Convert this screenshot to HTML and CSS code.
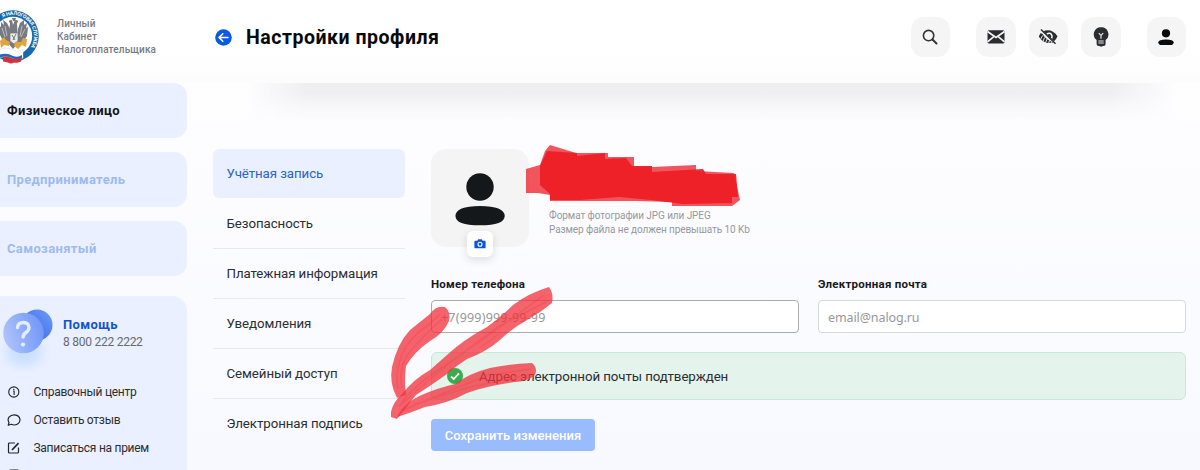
FILE: index.html
```html
<!DOCTYPE html>
<html lang="ru">

<head>
  <meta charset="UTF-8">
  <title>Настройки профиля</title>
  <link rel="stylesheet" href="styles.css">
</head>

<body>
  <header class="header">
    <div class="brand">
      <svg class="brand-logo" viewBox="0 0 39 56" width="39" height="56">
        <defs>
          <path id="ring" d="M2.800 8.500A21.1 21.1 0 0 1 30.1 39.200" />
        </defs>
        <circle cx="13" cy="27" r="25.8" fill="#1769aa" />
        <circle cx="13" cy="27" r="19.2" fill="#fff" />
        <text class="ring-text"><textPath href="#ring" textLength="55">Я НАЛОГОВАЯ СЛУЖБА</textPath></text>
        <g fill="#777a80">
          <path d="M10 20L7 14L3 11L4 16L1 13L1 18L-2 16L0 26L3 32L9 34ZM18 20L20 14L24 11L24 16L27 14L26 19L28 18L27 27L23 33L17 34Z" />
          <path d="M10 14q-3-3 2-3l1 5 2-5q5 0 2 3l1 20-5 6-5-6Z" />
          <path d="M12 9h4l-1 3h-2z" />
        </g>
        <path d="M5 17l2 10M2 19l3 9M22 17l-2 10M25 20l-4 8" stroke="#c9cbd0" stroke-width=".8" />
        <path d="M10 24h8v8l-4 3-4-3z" fill="#ececec" stroke="#777" stroke-width=".7" />
        <path d="M12 26l3 5M16 25l-3 6" stroke="#777" />
        <path d="M0 32l4-4 2 3 4 2-1 4-5-1-3 3zM27 30l-4-1-2 4-6 0-1 4 4 3 4-4 4 2z" fill="#e0a53f" />
        <path d="M-1 41q7-4 14 0q6 3 10-1v9q-6 4-11 0q-7-3-13 0z" fill="#fff" stroke="#ccd2da" stroke-width=".5" />
        <path d="M-1 46q7-3 14 1q5 2 9-1v3q-5 3-10 0q-6-3-13 0z" fill="#2768ae" />
        <path d="M3 48q5-1 9 1.500q5 2 10-1l-1 4q-4 2-7 1q-3 2-6 0l-5-1z" fill="#d5303c" />
      </svg>
      <div class="brand-name">Личный<br>Кабинет<br>Налогоплательщика</div>
    </div>

    <div class="page-title">
      <svg class="back" viewBox="0 0 17 17" width="17" height="17">
        <circle cx="8.5" cy="8.5" r="8.3" fill="#0b59e5" />
        <path d="M13 8.5H4M7.800 4.700l-3.800 3.800 3.800 3.800" fill="none" stroke="#fff" stroke-width="1.5" stroke-linecap="round" stroke-linejoin="round" />
      </svg>
      <h1>Настройки профиля</h1>
    </div>

    <div class="tools">
      <button class="tool tool-search">
        <svg viewBox="0 0 20 20" width="20" height="20" fill="none" stroke="#333538" stroke-width="1.6">
          <circle cx="8.600" cy="8.600" r="5.2" />
          <path d="M12.500 12.500l4 4" stroke-width="2" stroke-linecap="round" />
        </svg>
      </button>
      <button class="tool">
        <svg viewBox="0 0 20 20" width="20" height="20">
          <rect x="1.500" y="3.200" width="17" height="13.200" rx="1.5" fill="#2b2d30" />
          <path d="M1.500 4.500l8.500 6 8.500-6M1.500 14.800l6-5M18.500 14.800l-6-5" fill="none" stroke="#f5f5f5" stroke-width="1.700" />
        </svg>
      </button>
      <button class="tool">
        <svg viewBox="0 0 20 20" width="20" height="20">
          <path d="M4.500 4.700Q13 .3 19.500 9.200Q18.500 12 16 14.200Z" fill="#2b2d30" />
          <path d="M8.800 7q3.500-2 5 1.300q.5 1.500-.2 3" fill="none" stroke="#f5f5f5" stroke-width="1.600" />
          <path d="M2.800 6Q1.500 7.500.8 9.500Q5.500 18 15.500 15.500Q8 13 4.500 7z" fill="#2b2d30" />
          <path d="M2.500 12.500l2-4M5 14.500l1.500-4M7.500 16l1.500-4M10.500 16.500l1-3M13 16.500l.5-2" stroke="#f5f5f5" stroke-width=".9" />
          <path d="M4 4l14 13.500" stroke="#f5f5f5" stroke-width="1.200" />
          <path d="M3 2.500l14.500 14.200" stroke="#2b2d30" stroke-width="1.5" />
        </svg>
      </button>
      <button class="tool">
        <svg viewBox="0 0 20 20" width="20" height="20">
          <path d="M10 .3a7 7 0 0 0-4.4 12.600V17q0 2 2 2h.9q1.7 1.4 3.3 0h.8q2 0 2-2v-4.100A7 7 0 0 0 10 .3z" fill="#2b2d30" />
          <path d="M7.8 6.2l2.2 2.2 2.2-2.2M10 8.4v3.400" fill="none" stroke="#e6e6e8" stroke-width="1.2" />
          <path d="M7.400 14h5.300M7.400 16h5.300" stroke="#a9a9ac" stroke-width="1.300" />
        </svg>
      </button>
      <button class="tool tool-user">
        <svg viewBox="0 0 20 20" width="20" height="20" fill="#090a0c">
          <circle cx="10" cy="6.3" r="4.1" />
          <path d="M2.4 15.2Q2.6 12.5 10 12.5T17.6 15.2Q17.6 18 14.5 18h-9Q2.4 18 2.4 15.2z" />
        </svg>
      </button>
    </div>
  </header>

  <div class="layout">
    <aside class="sidebar">
      <a class="role role-active">Физическое лицо</a>
      <a class="role">Предприниматель</a>
      <a class="role">Самозанятый</a>

      <div class="help">
        <div class="help-top">
          <svg class="help-icon" viewBox="0 0 60 68" width="60" height="68">
            <defs>
              <linearGradient id="ball" x1="1" y1="0" x2="0" y2="1">
                <stop offset="0" stop-color="#6f9bf8" />
                <stop offset="1" stop-color="#2f62e8" />
              </linearGradient>
              <linearGradient id="glass" x1="0" y1=".6" x2="1" y2=".3">
                <stop offset="0" stop-color="#b0c4f8" />
                <stop offset=".6" stop-color="#87a8fa" />
                <stop offset="1" stop-color="#7096f6" />
              </linearGradient>
              <filter id="soft" x="-50%" y="-50%" width="200%" height="200%">
                <feGaussianBlur stdDeviation="6" />
              </filter>
            </defs>
            <ellipse cx="24" cy="47" rx="18" ry="14" fill="#c9deff" filter="url(#soft)" />
            <circle cx="37" cy="20" r="15.5" fill="url(#ball)" />
            <circle cx="23.5" cy="28" r="20.3" fill="url(#glass)" />
            <path d="M17.5 22.5q.3-5 5.7-5t5.8 5q0 3-3 5t-2.8 4.5" fill="none" stroke="#e4edff" stroke-width="3.4" stroke-linecap="round" />
            <circle cx="23" cy="39.5" r="2.1" fill="#e4edff" />
          </svg>
          <div>
            <div class="help-title">Помощь</div>
            <div class="help-phone">8 800 222 2222</div>
          </div>
        </div>
        <ul class="help-links">
          <li>
            <svg viewBox="0 0 14 14" width="14" height="14" fill="none" stroke="#222429" stroke-width="1.1">
              <circle cx="6.800" cy="7" r="5.1" />
              <path d="M6.100 6h1v4M6.800 3.7v1.2" />
            </svg>
            <span>Справочный центр</span>
          </li>
          <li>
            <svg viewBox="0 0 14 14" width="14" height="14" fill="none" stroke="#222429" stroke-width="1.2">
              <path d="M1.2 12.3l.8-2.8Q.2 6.8 2 4.2 4 1.7 7.4 1.8q5.3.4 5.6 5Q12.700 11.600 7.400 12q-1.700 0-3.100-.7z" stroke-linejoin="round" />
            </svg>
            <span>Оставить отзыв</span>
          </li>
          <li>
            <svg viewBox="0 0 14 14" width="14" height="14" fill="none" stroke="#222429" stroke-width="1.2">
              <path d="M8 2H2.500Q1.500 2 1.500 3v8q0 1 1 1h8q1 0 1-1V6.500" />
              <path d="M5 9l6.500-6.800" stroke-width="1.700" />
            </svg>
            <span>Записаться на прием</span>
          </li>
          <li>
            <svg viewBox="0 0 14 14" width="14" height="14" fill="none" stroke="#222429" stroke-width="1.2">
              <rect x="2.500" y="1" width="9" height="11" rx="1" />
            </svg>
          </li>
        </ul>
      </div>
    </aside>

    <main class="content">
      <nav class="menu">
        <a class="menu-item menu-item-active">Учётная запись</a>
        <a class="menu-item">Безопасность</a>
        <a class="menu-item">Платежная информация</a>
        <a class="menu-item">Уведомления</a>
        <a class="menu-item">Семейный доступ</a>
        <a class="menu-item">Электронная подпись</a>
      </nav>

      <section class="account">
        <div class="profile">
          <div class="avatar">
            <svg viewBox="0 0 98 98" width="98" height="98" fill="#15181a">
              <circle cx="49" cy="38" r="13.700" />
              <path d="M24.500 67q0-10 24.500-10t24.700 10q0 9.300-24.700 9.300T24.500 67z" />
            </svg>
            <button class="camera">
              <svg viewBox="0 0 12 10" width="12" height="10">
                <path d="M1.300 1.800h2l1-1.500h3.400l1 1.500h2q.9 0 .9.900v5.700q0 .9-.9.900H1.300q-.9 0-.9-.9V2.700q0-.9.9-.9z" fill="#0b55dc" />
                <circle cx="6" cy="5.300" r="2" fill="none" stroke="#fff" stroke-width="1.100" />
              </svg>
            </button>
          </div>
          <div class="photo-note">
            <div>Формат фотографии JPG или JPEG</div>
            <div>Размер файла не должен превышать 10 Kb</div>
          </div>
        </div>

        <div class="fields">
          <label class="field">
            <span>Номер телефона</span>
            <input class="input input-phone" type="text" placeholder="+7(999)999-99-99">
          </label>
          <label class="field">
            <span>Электронная почта</span>
            <input class="input" type="text" placeholder="email@nalog.ru">
          </label>
        </div>

        <div class="notice">
          <svg viewBox="0 0 16 16" width="16" height="16">
            <circle cx="8" cy="8" r="8" fill="#37ad4b" />
            <path d="M4 8.500l2.700 2.500L12 5.300" fill="none" stroke="#fff" stroke-width="1.800" />
          </svg>
          <span>Адрес электронной почты подтвержден</span>
        </div>

        <button class="save">Сохранить изменения</button>
      </section>
    </main>
  </div>

  <!-- red marker over the name and the arrow -->
  <svg class="marker" viewBox="0 0 1200 470" width="1200" height="470">
    <g fill="#ee1c25">
      <path d="M526 169L540 165L545 151L550 145L576 153H608V157H634V167H652L696 165V171L734 173L740 200L732 206H672V202L636 201L577 201H550V195L538 193H526Z" opacity=".75" />
      <path d="M540 166L547 151L577 153V156L605 153V159L626 158L632 166H652V172L703 169L706 174H736L738 197H732V203L683 204L651 200L619 197L580 200H550V194L540 185Z" opacity=".93" />
    </g>
    <g fill="#f2323d" fill-opacity=".76">
      <path d="M397 398Q389 383 392 367Q397 344 410 330Q420 322 430 314Q436 305 445 307Q451 312 449 321Q444 333 430 341Q414 352 406 366Q404 382 406 395Z" />
      <path d="M391 412Q393 402 402 394Q414 379 430 370L447 355Q463 340 487 327Q500 318 513 305Q529 293 549 287Q554 294 552 303Q540 313 527 320Q511 329 500 340Q486 352 467 359Q456 366 447 374Q430 386 416 395L397 419L391 417Z" />
      <path d="M397 417Q404 402 424 394Q438 388 455 384Q470 373 490 368Q510 364 532 363Q538 368 535 375Q527 382 515 382Q486 386 467 393Q449 403 425 407Q410 413 397 417Z" />
    </g>
    <g class="bristles">
      <path d="M398 389Q394 375 402 354Q412 335 427 326L440 314M402 388Q398 368 409 353Q422 337 442 319" />
      <path d="M399 407Q411 387 447 364L492 333L544 295M401 405Q430 378 464 352L499 326L546 302M480 348L499 334" />
      <path d="M403 410Q439 395 488 375L531 369M413 405L466 388L528 375" />
    </g>
  </svg>
</body>

</html>
```

FILE: styles.css
```css
* {
  box-sizing: border-box;
}

body {
  margin: 0;
  height: 470px;
  overflow: hidden;
  position: relative;
  font-family: Roboto, "Liberation Sans", sans-serif;
  color: #2b2d31;
  background: linear-gradient(#ffffff 0, #fdfdff 140px, #f8f9ff 470px);
  white-space: nowrap;
}

button {
  border: none;
  padding: 0;
  font-family: inherit;
}

.header {
  height: 83px;
  display: flex;
  background: linear-gradient(#fff 50px, #fcfcfd);
}

.brand {
  width: 215px;
  display: flex;
  align-items: flex-start;
  padding-top: 9px;
  gap: 18px;
}

.ring-text {
  font-size: 5.2px;
  font-weight: 700;
  fill: #fff;
}

.brand-name {
  padding-top: 8px;
  font-size: 10px;
  line-height: 13px;
  font-weight: 500;
  letter-spacing: 0.13px;
  color: #777b82;
}

.page-title {
  flex: 1;
  display: flex;
  align-items: center;
  gap: 14px;
  height: 74px;
}

h1 {
  margin: 0;
  font-size: 19.5px;
  font-weight: 700;
  letter-spacing: 0.53px;
  color: #08090b;
}

.tools {
  display: flex;
  gap: 13px;
  padding: 17px 14px 0 0;
}

.tool {
  width: 39.5px;
  height: 39.5px;
  border-radius: 13px;
  background: #f5f5f5;
  display: flex;
  align-items: center;
  justify-content: center;
}

.tool-search {
  margin-right: 13px;
}

.tool-user {
  margin-left: 13px;
}

.layout {
  display: flex;
  height: 387px;
}

.sidebar {
  width: 187px;
}

.role {
  display: flex;
  align-items: center;
  height: 55px;
  margin-bottom: 14px;
  padding-left: 7px;
  border-radius: 0 13px 13px 0;
  background: #eaf0ff;
  font-size: 13px;
  font-weight: 700;
  letter-spacing: 0.36px;
  color: #9dbaf3;
}

.role-active {
  color: #111216;
}

.help {
  height: 190px;
  margin-top: 20px;
  border-radius: 0 15px 0 0;
  background: #eaf0ff;
}

.help-top {
  display: flex;
  height: 82px;
  padding-top: 9px;
  gap: 3px;
}

.help-title {
  margin-top: 12px;
  font-size: 13px;
  line-height: 16px;
  font-weight: 700;
  letter-spacing: 0.4px;
  color: #1253ce;
}

.help-phone {
  font-size: 12px;
  line-height: 18px;
  letter-spacing: -0.25px;
  color: #66696f;
}

.help-links {
  margin: 0;
  padding: 0 0 0 7px;
  list-style: none;
}

.help-links li {
  display: flex;
  align-items: center;
  gap: 12.5px;
  height: 28px;
  font-size: 12px;
  letter-spacing: -0.27px;
}

.content {
  flex: 1;
  display: flex;
  gap: 26px;
  padding: 66px 14px 0 26px;
  position: relative;
}

/* shade under the header */
.content::before {
  content: "";
  position: absolute;
  top: 0;
  left: 60px;
  right: 24px;
  height: 42px;
  background: linear-gradient(#eeeeef 0, #efeff1 10px, rgba(243, 243, 246, 0.6) 24px, rgba(252, 252, 255, 0) 40px);
  -webkit-mask-image: linear-gradient(90deg, transparent, #000 60px, #000 calc(100% - 65px), transparent);
  mask-image: linear-gradient(90deg, transparent, #000 60px, #000 calc(100% - 65px), transparent);
}

.menu {
  width: 192px;
}

.menu-item {
  display: flex;
  align-items: center;
  height: 50px;
  padding-left: 13.5px;
  border-bottom: 1px solid #e7e9ef;
  font-size: 13.3px;
  letter-spacing: -0.08px;
}

.menu-item:last-child {
  height: 49px;
  border: none;
}

.menu-item-active {
  height: 49px;
  margin-bottom: 1px;
  border: none;
  border-radius: 6px;
  background: #eaf0ff;
  color: #2a63c6;
}

.account {
  flex: 1;
}

.profile {
  display: flex;
  gap: 20px;
}

.avatar {
  position: relative;
  width: 98px;
  height: 98px;
  border-radius: 15px;
  background: #f4f4f4;
}

.camera {
  position: absolute;
  left: 36px;
  top: 82px;
  width: 26px;
  height: 26px;
  border-radius: 6px;
  background: #fff;
  box-shadow: 0 3px 8px rgba(70, 80, 110, 0.18);
  display: flex;
  align-items: center;
  justify-content: center;
}

.photo-note {
  padding-top: 60px;
  font-size: 10px;
  line-height: 14px;
  letter-spacing: -0.08px;
  color: #96989d;
}

.fields {
  display: flex;
  gap: 19px;
  margin-top: 29px;
}

.field {
  flex: 1;
  display: flex;
  flex-direction: column;
  font-size: 11.5px;
  line-height: 17px;
  font-weight: 700;
  letter-spacing: 0.24px;
  color: #17181c;
}

.input {
  height: 33px;
  margin-top: 7px;
  padding: 2px 9px 0;
  border: 1px solid #d5d9d8;
  border-radius: 4px;
  background: #fff;
  font-family: "Noto Sans", sans-serif;
  font-size: 12.5px;
  letter-spacing: -0.1px;
}

.input-phone {
  border-color: #a9abad;
  letter-spacing: 0.2px;
}

.input::placeholder {
  color: #96989b;
  opacity: 1;
}

.notice {
  display: flex;
  align-items: center;
  gap: 16px;
  height: 48px;
  margin-top: 19px;
  padding-left: 15px;
  border: 1px solid #c8e7d4;
  border-radius: 6px;
  background: #e4f3eb;
  font-size: 13.3px;
  letter-spacing: -0.09px;
}

.save {
  width: 164px;
  height: 32px;
  margin-top: 19px;
  border-radius: 4px;
  background: #99bbff;
  color: #fff;
  font-size: 13px;
  font-weight: 500;
  letter-spacing: 0.06px;
}

.marker {
  position: absolute;
  left: 0;
  top: 0;
  pointer-events: none;
}

.bristles {
  fill: none;
  stroke: #e92735;
  stroke-width: 1.5px;
  opacity: 0.18;
}
```
